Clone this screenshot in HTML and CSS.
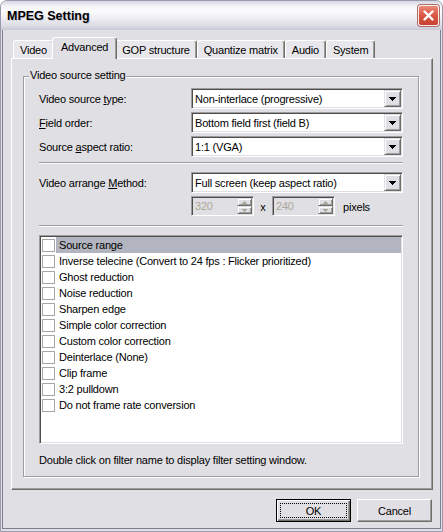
FILE: index.html
```html
<!DOCTYPE html>
<html>
<head>
<meta charset="utf-8">
<title>MPEG Setting</title>
<link rel="stylesheet" href="styles.css">
</head>
<body>
<div class="window">
  <div class="titlebar">
    <span class="title">MPEG Setting</span>
    <span class="close-btn"><svg width="11" height="11" viewBox="0 0 11 11"><path d="M1.5 1.5 L9.5 9.5 M9.5 1.5 L1.5 9.5" stroke="#fff" stroke-width="2.4" stroke-linecap="round"/></svg></span>
  </div>
  <div class="client">
    <div class="tabs">
      <div class="tab">Video</div>
      <div class="tab tab-active">Advanced</div>
      <div class="tab">GOP structure</div>
      <div class="tab">Quantize matrix</div>
      <div class="tab">Audio</div>
      <div class="tab">System</div>
    </div>
    <div class="panel">
      <div class="group">
        <span class="group-caption">Video source setting</span>
        <div class="form-grid">
          <span class="field-label">Video source <u>t</u>ype:</span>
          <div class="combo"><span class="combo-text">Non-interlace (progressive)</span><span class="drop-btn"><svg width="7" height="4" viewBox="0 0 7 4" shape-rendering="crispEdges"><path d="M0 0h7v1h-1v1h-1v1h-1v1h-1v-1h-1v-1h-1v-1h-1z" fill="#000"/></svg></span></div>
          <span class="field-label"><u>F</u>ield order:</span>
          <div class="combo"><span class="combo-text">Bottom field first (field B)</span><span class="drop-btn"><svg width="7" height="4" viewBox="0 0 7 4" shape-rendering="crispEdges"><path d="M0 0h7v1h-1v1h-1v1h-1v1h-1v-1h-1v-1h-1v-1h-1z" fill="#000"/></svg></span></div>
          <span class="field-label">Source <u>a</u>spect ratio:</span>
          <div class="combo"><span class="combo-text">1:1 (VGA)</span><span class="drop-btn"><svg width="7" height="4" viewBox="0 0 7 4" shape-rendering="crispEdges"><path d="M0 0h7v1h-1v1h-1v1h-1v1h-1v-1h-1v-1h-1v-1h-1z" fill="#000"/></svg></span></div>
        </div>
        <div class="etched-line sep-a"></div>
        <div class="form-grid">
          <span class="field-label">Video arrange <u>M</u>ethod:</span>
          <div class="combo"><span class="combo-text">Full screen (keep aspect ratio)</span><span class="drop-btn"><svg width="7" height="4" viewBox="0 0 7 4" shape-rendering="crispEdges"><path d="M0 0h7v1h-1v1h-1v1h-1v1h-1v-1h-1v-1h-1v-1h-1z" fill="#000"/></svg></span></div>
        </div>
        <div class="spin-row">
          <div class="spin"><span class="spin-text">320</span><span class="spin-btns"><span class="spin-btn"><svg width="5" height="3" viewBox="0 0 5 3" shape-rendering="crispEdges"><path d="M2 0h1v1h1v1h1v1h-5v-1h1v-1h1z" fill="#aca899"/></svg></span><span class="spin-btn"><svg width="5" height="3" viewBox="0 0 5 3" shape-rendering="crispEdges"><path d="M0 0h5v1h-1v1h-1v1h-1v-1h-1v-1h-1z" fill="#aca899"/></svg></span></span></div>
          <span class="times">x</span>
          <div class="spin"><span class="spin-text">240</span><span class="spin-btns"><span class="spin-btn"><svg width="5" height="3" viewBox="0 0 5 3" shape-rendering="crispEdges"><path d="M2 0h1v1h1v1h1v1h-5v-1h1v-1h1z" fill="#aca899"/></svg></span><span class="spin-btn"><svg width="5" height="3" viewBox="0 0 5 3" shape-rendering="crispEdges"><path d="M0 0h5v1h-1v1h-1v1h-1v-1h-1v-1h-1z" fill="#aca899"/></svg></span></span></div>
          <span class="pixels">pixels</span>
        </div>
        <div class="etched-line sep-b"></div>
        <div class="listbox">
          <div class="list-item"><span class="check"></span><span class="item-text selected">Source range</span></div>
          <div class="list-item"><span class="check"></span><span class="item-text">Inverse telecine (Convert to 24 fps : Flicker prioritized)</span></div>
          <div class="list-item"><span class="check"></span><span class="item-text">Ghost reduction</span></div>
          <div class="list-item"><span class="check"></span><span class="item-text">Noise reduction</span></div>
          <div class="list-item"><span class="check"></span><span class="item-text">Sharpen edge</span></div>
          <div class="list-item"><span class="check"></span><span class="item-text">Simple color correction</span></div>
          <div class="list-item"><span class="check"></span><span class="item-text">Custom color correction</span></div>
          <div class="list-item"><span class="check"></span><span class="item-text">Deinterlace (None)</span></div>
          <div class="list-item"><span class="check"></span><span class="item-text">Clip frame</span></div>
          <div class="list-item"><span class="check"></span><span class="item-text">3:2 pulldown</span></div>
          <div class="list-item"><span class="check"></span><span class="item-text">Do not frame rate conversion</span></div>
        </div>
        <p class="hint">Double click on filter name to display filter setting window.</p>
      </div>
    </div>
    <div class="buttons">
      <button class="btn btn-default"><span class="focus-rect">OK</span></button>
      <button class="btn">Cancel</button>
    </div>
  </div>
</div>
</body>
</html>
```

FILE: styles.css
```css
* { box-sizing: border-box; }
html, body { margin: 0; padding: 0; }
body {
  width: 443px;
  height: 532px;
  overflow: hidden;
  background: #ffffff;
  font-family: "Liberation Sans", Arial, sans-serif;
  font-size: 11px;
  letter-spacing: -0.2px;
  color: #000;
}
u { text-decoration: underline; text-underline-offset: 1px; }

.window {
  width: 443px;
  height: 532px;
  display: flex;
  flex-direction: column;
  background: #e0dfe3;
  border: 1px solid #9a9aae;
  border-radius: 7px 7px 0 0;
  overflow: hidden;
}

.titlebar {
  flex: none;
  height: 29px;
  display: flex;
  align-items: center;
  justify-content: space-between;
  padding: 0 3px 0 6px;
  background: linear-gradient(to bottom, #d6d6e2 0%, #f4f4f8 18%, #fcfcfd 35%, #eeeef3 60%, #dcdce5 85%, #c9c9d6 100%);
}
.title {
  font-weight: bold;
  font-size: 12.5px;
  letter-spacing: 0;
  color: #000;
  text-shadow: 1px 1px 0 rgba(160,160,175,0.45);
}
.close-btn {
  width: 21px;
  height: 21px;
  border-radius: 3px;
  border: 1px solid #f4f0f0;
  background: linear-gradient(to bottom, #ec8a78 0%, #dc5a48 45%, #c8402f 100%);
  box-shadow: 0 0 0 1px #b06a66;
  display: flex;
  align-items: center;
  justify-content: center;
}

.client {
  flex: 1;
  margin: 0 1px 2px;
  border: 1px solid #7f7f94;
  border-top: none;
  padding: 7px 7px 0 8px;
  display: flex;
  flex-direction: column;
}

/* tabs */
.tabs {
  position: relative;
  z-index: 1;
  display: flex;
  align-items: flex-end;
  height: 21px;
  padding-left: 2px;
}
.tab {
  height: 18px;
  padding: 0 6px;
  display: flex;
  align-items: center;
  background: #e8e7eb;
  border-top: 1px solid #ffffff;
  border-left: 1px solid #ffffff;
  border-right: 1px solid #716f64;
  box-shadow: inset -1px 0 0 #9d9da1;
  border-radius: 3px 3px 0 0;
  white-space: nowrap;
}
.tab-active {
  height: 22px;
  margin: 0 -2px -1px;
  padding: 0 8px 3px;
  background: #e0dfe3;
  position: relative;
  z-index: 2;
}

.panel {
  flex: none;
  height: 432px;
  border-top: 1px solid #ffffff;
  border-left: 1px solid #ffffff;
  border-right: 1px solid #716f64;
  border-bottom: 1px solid #716f64;
  box-shadow: inset -1px -1px 0 #9d9da1;
  padding: 17px 13px 0 11px;
}

/* group box */
.group {
  position: relative;
  border: 1px solid #9d9da1;
  box-shadow: inset 1px 1px 0 #ffffff, 1px 1px 0 #ffffff;
  padding: 11px 15px 9px 15px;
}
.group-caption {
  position: absolute;
  top: -8px;
  left: 5px;
  padding: 0 1px;
  line-height: 13px;
  background: #e0dfe3;
}

.form-grid {
  display: grid;
  grid-template-columns: 152px 212px;
  grid-auto-rows: 21px;
  row-gap: 3px;
}
.field-label {
  display: block;
  padding-top: 3px;
  line-height: 17px;
  white-space: nowrap;
}

.combo {
  height: 21px;
  display: flex;
  align-items: stretch;
  background: #ffffff;
  border: 1px solid;
  border-color: #9d9da1 #ffffff #ffffff #9d9da1;
  box-shadow: inset 1px 1px 0 #4e4d48, inset -1px -1px 0 #e0dfe3;
  padding: 1px;
}
.combo-text {
  flex: 1;
  display: flex;
  align-items: center;
  padding-left: 2px;
  white-space: nowrap;
  overflow: hidden;
}
.drop-btn {
  width: 17px;
  display: flex;
  align-items: center;
  justify-content: center;
  background: #e0dfe3;
  border: 1px solid;
  border-color: #e0dfe3 #716f64 #716f64 #e0dfe3;
  box-shadow: inset 1px 1px 0 #ffffff, inset -1px -1px 0 #9d9da1;
}

.etched-line {
  height: 2px;
  border-top: 1px solid #9d9da1;
  border-bottom: 1px solid #ffffff;
}
.sep-a { margin: 5px 0 8px; }
.sep-b { margin: 9px 0 8px; }

.spin-row {
  margin-top: 3px;
  margin-left: 152px;
  height: 20px;
  display: flex;
  align-items: center;
}
.spin {
  width: 63px;
  height: 20px;
  display: flex;
  background: #e0dfe3;
  border: 1px solid;
  border-color: #9d9da1 #ffffff #ffffff #9d9da1;
  box-shadow: inset 1px 1px 0 #4e4d48, inset -1px -1px 0 #e0dfe3;
  padding: 1px;
}
.spin-text {
  flex: 1;
  display: flex;
  align-items: center;
  padding-left: 2px;
  color: #aca899;
}
.spin-btns {
  width: 15px;
  display: flex;
  flex-direction: column;
}
.spin-btn {
  flex: 1;
  display: flex;
  align-items: center;
  justify-content: center;
  background: #e0dfe3;
  border: 1px solid;
  border-color: #e0dfe3 #716f64 #716f64 #e0dfe3;
  box-shadow: inset 1px 1px 0 #ffffff, inset -1px -1px 0 #9d9da1;
}
.times {
  width: 18px;
  text-align: center;
  padding-top: 2px;
}
.pixels {
  margin-left: 8px;
  padding-top: 2px;
}

/* list */
.listbox {
  height: 209px;
  background: #ffffff;
  border: 1px solid;
  border-color: #9d9da1 #ffffff #ffffff #9d9da1;
  box-shadow: inset 1px 1px 0 #4e4d48, inset -1px -1px 0 #e0dfe3;
  padding: 1px;
}
.list-item {
  height: 16px;
  display: flex;
  align-items: center;
}
.check {
  flex: none;
  width: 13px;
  height: 13px;
  margin-left: 1px;
  margin-right: 1px;
  border: 1px solid #a7a6aa;
  background: #ffffff;
}
.item-text {
  flex: 1;
  height: 16px;
  display: flex;
  align-items: center;
  padding-left: 3px;
  white-space: nowrap;
}
.item-text.selected {
  background: #b2b4bf;
}

.hint {
  margin: 10px 0 0;
  line-height: 13px;
}

/* buttons */
.buttons {
  margin-top: 9px;
  display: flex;
  justify-content: flex-end;
  gap: 6px;
  padding-right: 1px;
}
.btn {
  width: 75px;
  height: 23px;
  margin: 0;
  padding: 0;
  font-family: "Liberation Sans", Arial, sans-serif;
  font-size: 11px;
  letter-spacing: -0.2px;
  color: #000;
  background: #e0dfe3;
  border: 1px solid;
  border-color: #ffffff #716f64 #716f64 #ffffff;
  box-shadow: inset -1px -1px 0 #9d9da1;
  display: flex;
  align-items: center;
  justify-content: center;
}
.btn-default {
  border: 1px solid #000;
  box-shadow: inset 1px 1px 0 #ffffff, inset -1px -1px 0 #716f64, inset -2px -2px 0 #9d9da1;
  padding: 3px;
}
.focus-rect {
  width: 100%;
  height: 100%;
  border: 1px dotted #000;
  display: flex;
  align-items: center;
  justify-content: center;
}
```
